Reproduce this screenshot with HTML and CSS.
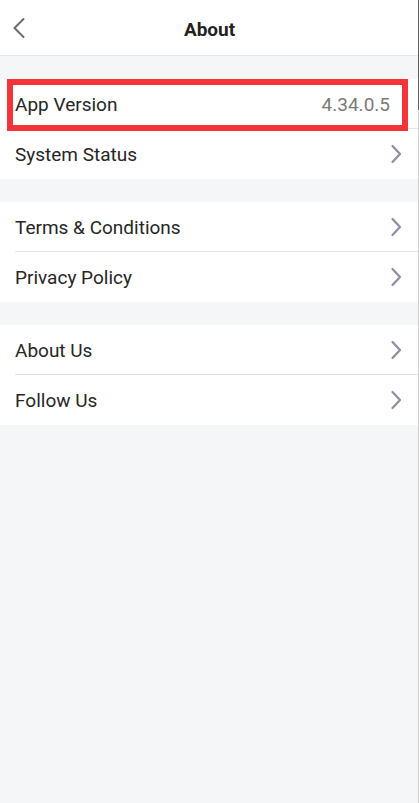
FILE: index.html
```html
<!DOCTYPE html>
<html lang="en">
<head>
<meta charset="utf-8">
<title>About</title>
<link rel="stylesheet" href="styles.css">
</head>
<body>
<div class="page">
  <header class="topbar">
    <span class="back">
      <svg width="14" height="22" viewBox="0 0 14 22"><path d="M11.5 2 L2.5 11 L11.5 20" fill="none" stroke="#6b6b6b" stroke-width="2" stroke-linecap="round" stroke-linejoin="round"/></svg>
    </span>
    <h1 class="title">About</h1>
    <span class="spacer"></span>
  </header>

  <section class="group">
    <div class="row highlighted">
      <span class="label">App Version</span>
      <span class="value">4.34.0.5</span>
      <span class="mark"></span>
    </div>
    <div class="row">
      <span class="label">System Status</span>
      <svg class="chev" width="12" height="20" viewBox="0 0 12 20"><path d="M2.5 2 L10 10 L2.5 18" fill="none" stroke="#8d90a1" stroke-width="2.2" stroke-linecap="round" stroke-linejoin="round"/></svg>
    </div>
  </section>

  <section class="group">
    <div class="row">
      <span class="label">Terms &amp; Conditions</span>
      <svg class="chev" width="12" height="20" viewBox="0 0 12 20"><path d="M2.5 2 L10 10 L2.5 18" fill="none" stroke="#8d90a1" stroke-width="2.2" stroke-linecap="round" stroke-linejoin="round"/></svg>
    </div>
    <div class="row">
      <span class="label">Privacy Policy</span>
      <svg class="chev" width="12" height="20" viewBox="0 0 12 20"><path d="M2.5 2 L10 10 L2.5 18" fill="none" stroke="#8d90a1" stroke-width="2.2" stroke-linecap="round" stroke-linejoin="round"/></svg>
    </div>
  </section>

  <section class="group">
    <div class="row">
      <span class="label">About Us</span>
      <svg class="chev" width="12" height="20" viewBox="0 0 12 20"><path d="M2.5 2 L10 10 L2.5 18" fill="none" stroke="#8d90a1" stroke-width="2.2" stroke-linecap="round" stroke-linejoin="round"/></svg>
    </div>
    <div class="row">
      <span class="label">Follow Us</span>
      <svg class="chev" width="12" height="20" viewBox="0 0 12 20"><path d="M2.5 2 L10 10 L2.5 18" fill="none" stroke="#8d90a1" stroke-width="2.2" stroke-linecap="round" stroke-linejoin="round"/></svg>
    </div>
  </section>
</div>
<div class="edge"></div>
</body>
</html>
```

FILE: styles.css
```css
* { box-sizing: border-box; }
html, body { margin: 0; padding: 0; }
body {
  background: #f5f6f8;
  font-family: Roboto, "Liberation Sans", Arial, sans-serif;
  color: #222;
  min-height: 803px;
}
.page {
  display: flex;
  flex-direction: column;
  gap: 23px;
}
.topbar {
  height: 56px;
  background: #fff;
  border-bottom: 1px solid #e6e6e8;
  display: flex;
  align-items: center;
  padding: 3px 12px 0;
}
.back, .spacer {
  width: 30px;
  display: flex;
  align-items: center;
}
.back svg { display: block; margin-top: -2px; }
.title {
  flex: 1;
  margin: 0;
  text-align: center;
  font-size: 19px;
  font-weight: 700;
  color: #222;
}
.group {
  background: #fff;
  display: flex;
  flex-direction: column;
}
.row {
  position: relative;
  height: 50px;
  display: flex;
  align-items: center;
  justify-content: space-between;
  padding: 0 17px 0 15px;
  font-size: 19px;
}
.row + .row::before {
  content: "";
  position: absolute;
  top: -1px;
  left: 15px;
  right: 0;
  height: 1px;
  background: #e3e3e6;
}
.label { color: #262626; }
.value {
  color: #7a7a7a;
  margin-right: 12px;
}
.chev { display: block; }
.highlighted .mark {
  position: absolute;
  left: 7px;
  right: 11px;
  top: 0;
  bottom: -2px;
  border: 6px solid #f5343a;
  z-index: 2;
}
.edge {
  position: fixed;
  top: 0;
  right: 0;
  width: 1px;
  height: 803px;
  background: linear-gradient(#5e5e5e 0, #5e5e5e 110px, #cfcfcf 110px);
}
```
